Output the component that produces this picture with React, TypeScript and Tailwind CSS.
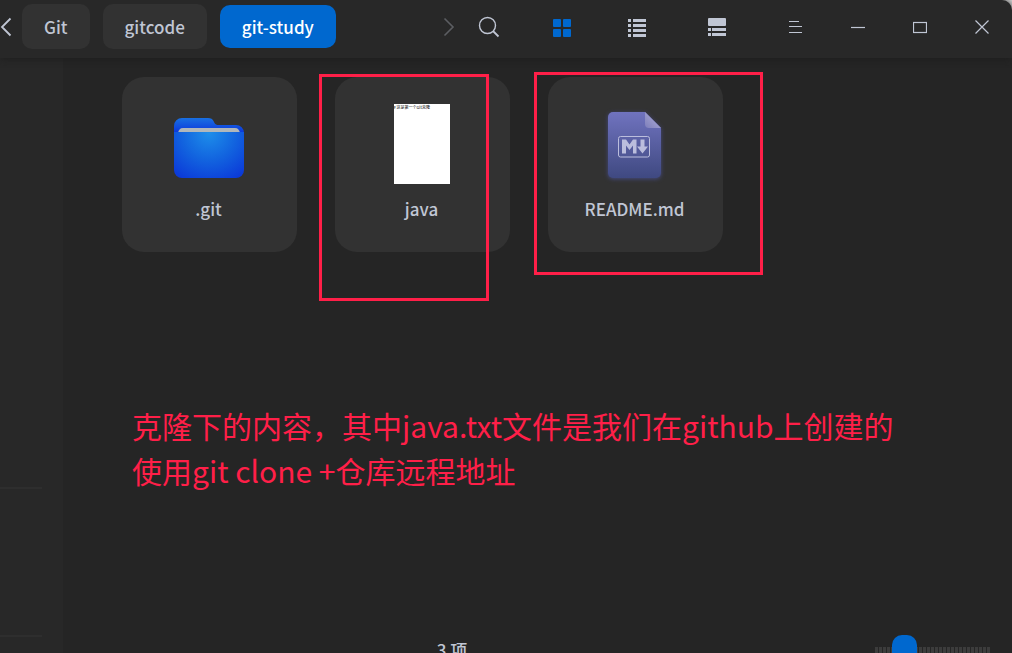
import { useState } from "react";
import type { ReactNode } from "react";
import clsx from "clsx";

const tabs = ["Git", "gitcode", "git-study"];

function IconButton({ label, className, children }: { label: string; className?: string; children: ReactNode }) {
  return (
    <button
      type="button"
      aria-label={label}
      className={clsx("flex h-10 w-10 shrink-0 items-center justify-center text-[#c0c6d4]", className)}
    >
      {children}
    </button>
  );
}

function FolderIcon() {
  return (
    <svg width="70" height="70" viewBox="0 -8 70 70" fill="none">
      <defs>
        <linearGradient id="folderBack" x1="0" y1="0" x2="0" y2="16" gradientUnits="userSpaceOnUse">
          <stop stopColor="#1a74e2" />
          <stop offset="1" stopColor="#0b35dc" />
        </linearGradient>
        <radialGradient id="folderFront" cx="35" cy="16" r="54" gradientUnits="userSpaceOnUse">
          <stop stopColor="#1d8eea" />
          <stop offset="0.5" stopColor="#1264df" />
          <stop offset="1" stopColor="#0b38d8" />
        </radialGradient>
      </defs>
      <path d="M0 9a8 8 0 0 1 8-8h26c3 0 4.500 1 5.500 3l1 2c1 1.500 2 2 4 2h17.500a8 8 0 0 1 8 8v6H0z" fill="url(#folderBack)" />
      <path d="M4 16c.5-3 2-5 5-5h52c3 0 4.500 2 5 5z" fill="#b0b7bb" />
      <path d="M0 15h70v38a8 8 0 0 1-8 8H8a8 8 0 0 1-8-8z" fill="url(#folderFront)" />
    </svg>
  );
}

function MarkdownIcon() {
  return (
    <svg width="53" height="68" viewBox="0 -2 53 68" fill="none" className="drop-shadow-[0_1px_2px_#454a80]">
      <defs>
        <linearGradient id="mdPage" x1="0" y1="0" x2="0" y2="66" gradientUnits="userSpaceOnUse">
          <stop stopColor="#7073bf" />
          <stop offset="1" stopColor="#3f4981" />
        </linearGradient>
        <linearGradient id="mdFold" x1="37" y1="15" x2="45" y2="7" gradientUnits="userSpaceOnUse">
          <stop stopColor="#7f80bc" />
          <stop offset="1" stopColor="#9b9bcb" />
        </linearGradient>
      </defs>
      <path d="M5 0h32l16 16v45a5 5 0 0 1-5 5H5a5 5 0 0 1-5-5V5a5 5 0 0 1 5-5z" fill="url(#mdPage)" />
      <path d="M37 0l16 16H41a4 4 0 0 1-4-4z" fill="url(#mdFold)" />
      <rect x="10.500" y="24.500" width="31" height="20.500" rx="2" stroke="#bbbedd" />
      <path d="M14 41.500v-14h4l3.500 5 3.500-5h3.500v14H25v-8l-3.500 4.500-3.500-4.500v8z" fill="#bbbedd" />
      <path d="M32.500 27.500h4v7H40l-5.500 7-5.500-7h3.500z" fill="#bbbedd" />
    </svg>
  );
}

function FileCard({ name, icon, children }: { name: string; icon: ReactNode; children?: ReactNode }) {
  return (
    <li className="relative h-[175px] w-[175px] shrink-0">
      <button type="button" className="flex h-full w-full flex-col items-center rounded-[22px] bg-[#323232] pt-[27px] pr-[2px]">
        <span className="flex h-20 items-center justify-center">{icon}</span>
        <span className="mt-[13px] text-[17px] leading-6 font-medium">{name}</span>
      </button>
      {children}
    </li>
  );
}

function Header() {
  const [active, setActive] = useState("git-study");

  return (
    <header className="z-10 flex h-[58px] shrink-0 items-center rounded-tr-[10px] bg-[#282828] pr-[10px] pb-[5px] shadow-[0_0_8px_#1c1c1c]">
      <button type="button" aria-label="后退" className="w-[22px] shrink-0">
        <svg width="12" height="20" viewBox="0 0 12 20" fill="none" stroke="#c0c6d4" strokeWidth="1.800">
          <path d="M10.500 1.500L2 10l8.500 8.500" />
        </svg>
      </button>
      <nav className="flex flex-1 items-center gap-[13px]">
        {tabs.map((tab) => (
          <button
            key={tab}
            type="button"
            onClick={() => setActive(tab)}
            className={clsx(
              "rounded-[10px] px-[22px] text-[17px] font-medium",
              tab === active ? "h-[43px] bg-[#0068cf] text-white" : "h-[45px] bg-[#323232]"
            )}
          >
            {tab}
          </button>
        ))}
      </nav>
      <IconButton label="前进">
        <svg width="12" height="20" viewBox="0 0 12 20" fill="none" stroke="#5c5e62" strokeWidth="1.600">
          <path d="M1.500 1.500L10 10l-8.500 8.500" />
        </svg>
      </IconButton>
      <IconButton label="搜索">
        <svg width="22" height="22" viewBox="0 0 22 22" fill="none" stroke="currentColor" strokeWidth="1.400">
          <circle cx="9.500" cy="9.500" r="8" />
          <path d="M15 15l5.500 5.500" strokeWidth="1.800" />
        </svg>
      </IconButton>
      <IconButton label="图标视图" className="ml-[33px] pt-[3px]">
        <svg width="18" height="18" viewBox="0 0 18 18" fill="#0068cf">
          <rect width="8" height="8" rx="1" />
          <rect x="10" width="8" height="8" rx="1" />
          <rect y="10" width="8" height="8" rx="1" />
          <rect x="10" y="10" width="8" height="8" rx="1" />
        </svg>
      </IconButton>
      <IconButton label="列表视图" className="ml-[35px] pt-[3px]">
        <svg width="18" height="18" viewBox="0 0 18 18" fill="currentColor">
          <path d="M0 0h3v3H0zM5 0h13v3H5zM0 5h3v3H0zM5 5h13v3H5zM0 10h3v3H0zM5 10h13v3H5zM0 15h3v3H0zM5 15h13v3H5z" />
        </svg>
      </IconButton>
      <IconButton label="分栏视图" className="ml-10">
        <svg width="18" height="18" viewBox="0 0 18 18" fill="currentColor">
          <rect width="18" height="8" rx="1" />
          <path d="M0 10h3v3H0zM4 10h14v3H4zM0 15h3v3H0zM4 15h14v3H4z" />
        </svg>
      </IconButton>
      <IconButton label="菜单" className="ml-[38px]">
        <svg width="14" height="14" viewBox="0 0 14 14" stroke="currentColor" strokeWidth="1.200">
          <path d="M1 1.500h10M1 6.500h13M1 12.500h13" />
        </svg>
      </IconButton>
      <IconButton label="最小化" className="ml-[23px]">
        <svg width="14" height="14" viewBox="0 0 14 14" stroke="currentColor" strokeWidth="1.200">
          <path d="M0 7.500h14" />
        </svg>
      </IconButton>
      <IconButton label="最大化" className="ml-[22px]">
        <svg width="14" height="14" viewBox="0 0 14 14" fill="none" stroke="currentColor" strokeWidth="1.200">
          <rect x="0.500" y="2.500" width="13" height="10" />
        </svg>
      </IconButton>
      <IconButton label="关闭" className="ml-[22px]">
        <svg width="14" height="14" viewBox="0 0 14 14" stroke="currentColor" strokeWidth="1.200">
          <path d="M0.500 0.500l13 13M13.500 0.500l-13 13" />
        </svg>
      </IconButton>
    </header>
  );
}

export default function App() {
  const [size, setSize] = useState(19);

  return (
    <div className="flex h-screen flex-col overflow-hidden bg-[#dedede] font-['Noto_Sans_CJK_SC',sans-serif] text-[#c0c6d4]">
      <Header />
      <div className="flex min-h-0 flex-1 bg-[#252525]">
        {/* Barra lateral */}
        <aside className="flex w-[63px] shrink-0 flex-col justify-end gap-[146px] bg-[#282828] pb-4">
          <hr className="w-[42px] border-t-2 border-[#2e2e2e]" />
          <hr className="w-[42px] border-t-2 border-[#2e2e2e]" />
        </aside>
        <div className="flex min-w-0 flex-1 flex-col">
          <main className="flex-1 pt-[19px] pl-[59px]">
            <ul className="flex gap-[38px]">
              <FileCard name=".git" icon={<FolderIcon />} />
              <FileCard
                name="java"
                icon={
                  <span className="block h-20 w-14 overflow-hidden bg-white text-left text-[4px] leading-[6px] whitespace-nowrap text-black">
                    # 这是第一个Git克隆
                  </span>
                }
              >
                <div className="pointer-events-none absolute -top-[3px] -left-4 h-[227px] w-[170px] border-3 border-[#ff1f48]" />
              </FileCard>
              <FileCard name="README.md" icon={<MarkdownIcon />}>
                <div className="pointer-events-none absolute -top-[5px] -left-[14px] h-[203px] w-[229px] border-3 border-[#ff1f48]" />
              </FileCard>
            </ul>
            <p className="mt-[151px] ml-[10px] text-[30px] leading-[45px] text-[#ff1f48]">
              克隆下的内容，其中java.txt文件是我们在github上创建的
              <br />
              使用git clone +仓库远程地址
            </p>
          </main>
          {/* La barra de estado queda cortada por el borde inferior */}
          <footer className="-mb-[18px] flex h-9 shrink-0 items-start pr-[22px]">
            <p className="flex-1 pt-[3px] pr-[34px] text-center text-[17px] leading-6 font-medium">3 项</p>
            <input
              type="range"
              aria-label="图标大小"
              value={size}
              onChange={(e) => setSize(Number(e.target.value))}
              className="h-9 w-[115px] appearance-none bg-transparent [&::-webkit-slider-runnable-track]:h-3 [&::-webkit-slider-runnable-track]:bg-[repeating-linear-gradient(to_right,#3c3c3c_0_3px,#252525_3px_4px)] [&::-webkit-slider-thumb]:-mt-3 [&::-webkit-slider-thumb]:h-9 [&::-webkit-slider-thumb]:w-[25px] [&::-webkit-slider-thumb]:appearance-none [&::-webkit-slider-thumb]:rounded-[10px] [&::-webkit-slider-thumb]:bg-[#0068cf]"
            />
          </footer>
        </div>
      </div>
    </div>
  );
}
